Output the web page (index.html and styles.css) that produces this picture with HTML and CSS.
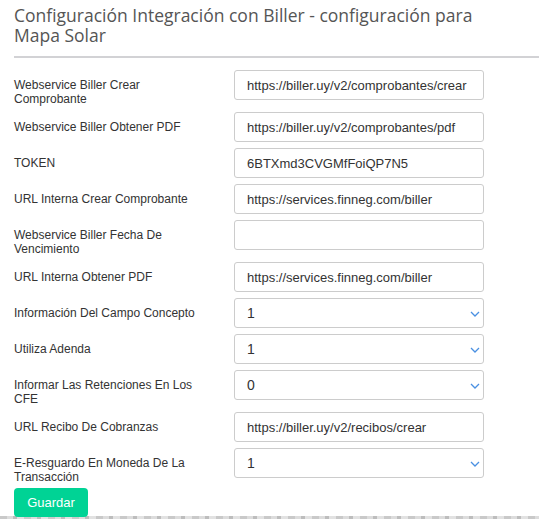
FILE: index.html
```html
<!DOCTYPE html>
<html lang="es">
<head>
<meta charset="utf-8">
<title>Configuración Integración con Biller</title>
<link rel="stylesheet" href="styles.css">
</head>
<body>
<div class="panel">
  <h1 class="title">Configuración Integración con Biller - configuración para Mapa Solar</h1>
  <div class="sep"></div>
  <form class="form">
    <div class="row">
      <label class="lbl">Webservice Biller Crear Comprobante</label>
      <div class="field"><input class="ctl" type="text" value="https://biller.uy/v2/comprobantes/crear"></div>
    </div>
    <div class="row">
      <label class="lbl">Webservice Biller Obtener PDF</label>
      <div class="field"><input class="ctl" type="text" value="https://biller.uy/v2/comprobantes/pdf"></div>
    </div>
    <div class="row">
      <label class="lbl">TOKEN</label>
      <div class="field"><input class="ctl" type="text" value="6BTXmd3CVGMfFoiQP7N5"></div>
    </div>
    <div class="row">
      <label class="lbl">URL Interna Crear Comprobante</label>
      <div class="field"><input class="ctl" type="text" value="https://services.finneg.com/biller"></div>
    </div>
    <div class="row">
      <label class="lbl">Webservice Biller Fecha De Vencimiento</label>
      <div class="field"><input class="ctl" type="text" value=""></div>
    </div>
    <div class="row">
      <label class="lbl">URL Interna Obtener PDF</label>
      <div class="field"><input class="ctl" type="text" value="https://services.finneg.com/biller"></div>
    </div>
    <div class="row">
      <label class="lbl">Información Del Campo Concepto</label>
      <div class="field sel"><div class="ctl selbox">1</div><svg class="chev" viewBox="0 0 10 6" width="10" height="6"><path d="M1 1 L5 5 L9 1" fill="none" stroke="#4a90e2" stroke-width="1.3"/></svg></div>
    </div>
    <div class="row">
      <label class="lbl">Utiliza Adenda</label>
      <div class="field sel"><div class="ctl selbox">1</div><svg class="chev" viewBox="0 0 10 6" width="10" height="6"><path d="M1 1 L5 5 L9 1" fill="none" stroke="#4a90e2" stroke-width="1.3"/></svg></div>
    </div>
    <div class="row">
      <label class="lbl">Informar Las Retenciones En Los CFE</label>
      <div class="field sel"><div class="ctl selbox">0</div><svg class="chev" viewBox="0 0 10 6" width="10" height="6"><path d="M1 1 L5 5 L9 1" fill="none" stroke="#4a90e2" stroke-width="1.3"/></svg></div>
    </div>
    <div class="row">
      <label class="lbl">URL Recibo De Cobranzas</label>
      <div class="field"><input class="ctl" type="text" value="https://biller.uy/v2/recibos/crear"></div>
    </div>
    <div class="row">
      <label class="lbl">E-Resguardo En Moneda De La Transacción</label>
      <div class="field sel"><div class="ctl selbox">1</div><svg class="chev" viewBox="0 0 10 6" width="10" height="6"><path d="M1 1 L5 5 L9 1" fill="none" stroke="#4a90e2" stroke-width="1.3"/></svg></div>
    </div>
    <div class="actions">
      <button type="button" class="btn">Guardar</button>
    </div>
  </form>
</div>
<div class="footer-strip"></div>
</body>
</html>
```
FILE: styles.css
```css
html, body {
  margin: 0;
  padding: 0;
  background: #fff;
}
body {
  font-family: "Liberation Sans", Arial, sans-serif;
  color: #333;
  overflow: hidden;
  height: 519px;
}
.panel {
  padding: 5px 0 0 14px;
  height: 511px;
  background: #fff;
}
.title {
  margin: 0;
  font-family: "Open Sans", "Liberation Sans", sans-serif;
  font-weight: 400;
  font-size: 17.5px;
  line-height: 20px;
  color: #555;
  width: 470px;
}
.sep {
  height: 2px;
  background: #d2d2d5;
  margin: 11px 0 12px 0;
}
.form {
  display: flex;
  flex-direction: column;
  gap: 6px;
}
.row {
  display: grid;
  grid-template-columns: 220px 250px;
  align-items: start;
}
.lbl {
  font-size: 12px;
  line-height: 14px;
  padding: 8px 28px 0 0;
  color: #333;
}
.field {
  position: relative;
  height: 30px;
}
.ctl {
  box-sizing: border-box;
  width: 250px;
  height: 30px;
  border: 1px solid #ccc;
  border-radius: 3px;
  padding: 0 12px;
  font-family: "Liberation Sans", Arial, sans-serif;
  font-size: 13px;
  color: #333;
  background: #fff;
  outline: none;
  margin: 0;
}
.selbox {
  display: flex;
  align-items: center;
  font-size: 14px;
  color: #333;
}
.chev {
  position: absolute;
  right: 4px;
  top: 13px;
}
.actions {
  margin-top: -2px;
}
.btn {
  background: #00d395;
  color: #fff;
  border: none;
  border-radius: 4px;
  font-family: "Liberation Sans", Arial, sans-serif;
  font-size: 13px;
  height: 29px;
  width: 74px;
  padding: 0;
  cursor: pointer;
}
.footer-strip {
  height: 8px;
  background: repeating-linear-gradient(90deg, #c9c9c9 0 7px, #dcdcdc 7px 13px, #bdbdbd 13px 17px, #e2e2e2 17px 24px);
}
```
